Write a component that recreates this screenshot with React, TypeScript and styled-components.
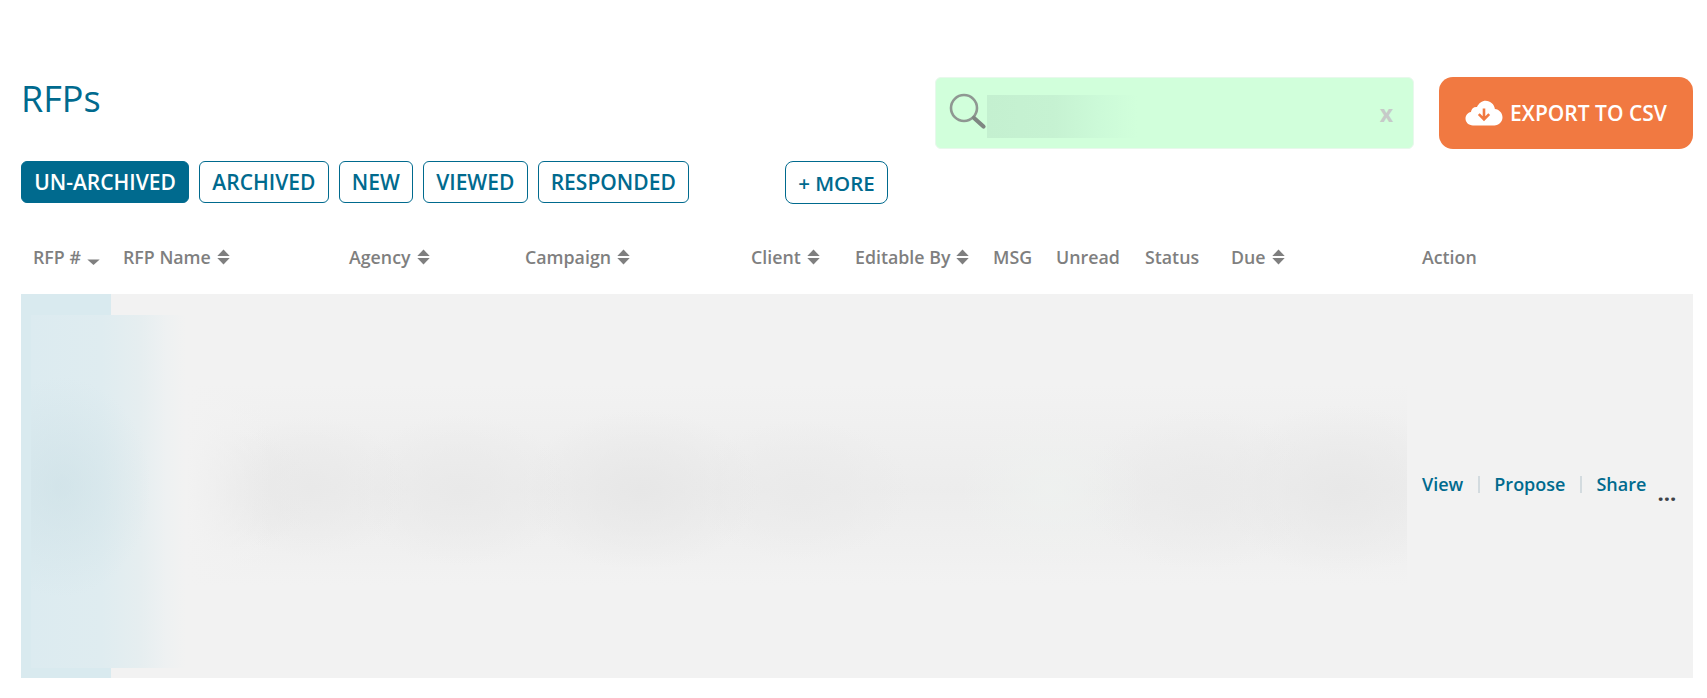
import React from 'react';
import styled, { createGlobalStyle } from 'styled-components';

const GlobalStyle = createGlobalStyle`
  html, body {
    margin: 0;
    padding: 0;
    background: #fff;
    font-family: 'Open Sans', 'Liberation Sans', sans-serif;
  }
`;

const COLUMNS = '90px 226px 176px 226px 104px 138px 63px 89px 86px 191px 283px';

const Page = styled.div`
  width: 1707px;
  height: 698px;
  box-sizing: border-box;
  padding: 77px 14px 0 21px;
  overflow: hidden;
`;

const Toolbar = styled.div`
  display: flex;
  justify-content: space-between;
  align-items: flex-start;
`;

const TitleBlock = styled.div`
  display: flex;
  flex-direction: column;
`;

const Title = styled.h1`
  margin: 0 0 32px 0;
  height: 52px;
  font-size: 36px;
  line-height: 44px;
  font-weight: 400;
  color: #006a8e;
`;

const Tabs = styled.div`
  display: flex;
  gap: 10px;
`;

const Tab = styled.button<{ $active?: boolean }>`
  height: 42px;
  padding: 0 12.2px;
  border: 1px solid #006a8e;
  border-radius: 6px;
  background: ${props => (props.$active ? '#006a8e' : '#fff')};
  color: ${props => (props.$active ? '#fff' : '#006a8e')};
  font-family: inherit;
  font-size: 21px;
  font-weight: 600;
`;

const MoreTab = styled(Tab)`
  height: 43px;
  margin-left: 86px;
  border-radius: 8px;
  font-size: 20.5px;
`;

const Actions = styled.div`
  display: flex;
  gap: 25px;
`;

const SearchBox = styled.div`
  position: relative;
  display: flex;
  align-items: center;
  justify-content: space-between;
  box-sizing: border-box;
  width: 479px;
  height: 72px;
  padding: 0 20px 0 12px;
  background: #d1ffdb;
  border: 1px solid #e8f8ec;
  border-radius: 6px;
`;

const SearchValue = styled.div`
  position: absolute;
  left: 51px;
  top: 17px;
  width: 150px;
  height: 43px;
  background: linear-gradient(90deg, #c4f0d0 0%, #c6f2d2 45%, #ccfad8 75%, #d1ffdb 100%);
`;

const ClearButton = styled.span`
  font-size: 23px;
  font-weight: 700;
  line-height: 24px;
  color: #c6cac8;
`;

const ExportButton = styled.button`
  display: flex;
  align-items: center;
  justify-content: center;
  gap: 7px;
  width: 254px;
  height: 72px;
  padding: 0;
  border: 0;
  border-radius: 14px;
  background: #f17941;
  color: #fff;
  font-family: inherit;
  font-size: 21px;
  font-weight: 600;
`;

const HeaderRow = styled.div`
  display: grid;
  grid-template-columns: ${COLUMNS};
  align-items: center;
  height: 56px;
  margin-top: 25px;
`;

const HeaderCell = styled.div`
  display: flex;
  align-items: center;
  gap: 6px;
  padding-left: 12px;
  font-size: 17.8px;
  font-weight: 600;
  color: #7f7f7f;
  white-space: nowrap;
`;

const BodyRow = styled.div`
  position: relative;
  display: grid;
  grid-template-columns: ${COLUMNS};
  height: 384px;
  margin-top: 9px;
  background: #f2f2f2;
`;

const IdCell = styled.div`
  grid-column: 1;
  background: #d9eaef;
`;

const ActionCell = styled.div`
  grid-column: 11;
  display: flex;
  align-items: center;
  padding: 0 0 4px 12px;
  font-size: 18px;
  font-weight: 600;
  color: #006a8e;
`;

const Divider = styled.span`
  width: 2px;
  height: 17px;
  margin: 0 14.5px;
  background: #d3dbdf;
`;

const MoreDots = styled.span`
  align-self: center;
  margin: 15px 0 0 11px;
  font-size: 22px;
  line-height: 20px;
  font-weight: 700;
  color: #3d4248;
`;

/* redacted row contents, blurred in the reference */
const BlurPatch = styled.div`
  position: absolute;
  left: 10px;
  top: 21px;
  width: 1376px;
  height: 353px;
  pointer-events: none;
  background:
    radial-gradient(ellipse 90px 110px at 30px 172px, rgba(200, 221, 227, 0.5), rgba(200, 221, 227, 0)),
    linear-gradient(90deg, #dcebf0 0px, #dfecf0 70px, #e6eef0 110px, #eef1f2 135px, #f2f2f2 155px, rgba(242, 242, 242, 0) 240px),
    radial-gradient(ellipse 90px 80px at 1020px 175px, rgba(239, 242, 240, 0.75), rgba(239, 242, 240, 0)),
    radial-gradient(ellipse 90px 60px at 200px 175px, #e9e9e9, rgba(233, 233, 233, 0)),
    radial-gradient(ellipse 100px 70px at 280px 172px, #e9e9e9, rgba(233, 233, 233, 0)),
    radial-gradient(ellipse 110px 75px at 430px 175px, #e9e9e9, rgba(233, 233, 233, 0)),
    radial-gradient(ellipse 120px 80px at 610px 175px, #e7e7e7, rgba(231, 231, 231, 0)),
    radial-gradient(ellipse 110px 70px at 770px 175px, #eaeaea, rgba(234, 234, 234, 0)),
    radial-gradient(ellipse 120px 80px at 1170px 175px, #eaeaea, rgba(234, 234, 234, 0)),
    radial-gradient(ellipse 120px 85px at 1310px 175px, #e8e8e8, rgba(232, 232, 232, 0)),
    linear-gradient(180deg, rgba(236, 236, 236, 0) 70px, rgba(236, 236, 236, 0.9) 175px, rgba(236, 236, 236, 0) 270px);
`;

const SortIcon = () => (
  <svg width="13" height="16" viewBox="0 0 13 16" fill="#7f7f7f">
    <path d="M6.5 0.5 12.7 7H0.3Z" />
    <path d="M6.5 15.5 0.3 9H12.7Z" />
  </svg>
);

const SortedIcon = () => (
  <svg width="13" height="16" viewBox="0 0 13 16" fill="#7f7f7f">
    <path d="M6.5 16 0.3 10.5H12.7Z" />
  </svg>
);

const SearchIcon = () => (
  <svg width="40" height="40" viewBox="0 0 40 40" fill="none">
    <circle cx="16" cy="15" r="13" stroke="#8f9792" strokeWidth="2.6" />
    <path d="M26 25 35.5 33.5" stroke="#7f8782" strokeWidth="4.2" strokeLinecap="round" />
  </svg>
);

const CloudIcon = () => (
  <svg width="38" height="26" viewBox="0 0 38 26">
    <path
      d="M8 25.5C3.6 25.5.5 22.4.5 18.6c0-3.4 2.4-6 5.4-6.7C6.4 8.6 9 6.6 12 7 13.8 3.2 17 .8 20.6.8c4.9 0 8.7 3.6 9.3 8.3 4.2.4 7.6 4 7.6 8.2 0 4.6-3.6 8.2-8.2 8.2Z"
      fill="#fff"
    />
    <path d="M19 8.5V19M13.8 14.2 19 19.4l5.2-5.2" fill="none" stroke="#f17941" strokeWidth="2.6" />
  </svg>
);

type Column = { label: string; sort?: 'both' | 'sorted' };

const columns: Column[] = [
  { label: 'RFP #', sort: 'sorted' },
  { label: 'RFP Name', sort: 'both' },
  { label: 'Agency', sort: 'both' },
  { label: 'Campaign', sort: 'both' },
  { label: 'Client', sort: 'both' },
  { label: 'Editable By', sort: 'both' },
  { label: 'MSG' },
  { label: 'Unread' },
  { label: 'Status' },
  { label: 'Due', sort: 'both' },
  { label: 'Action' },
];

const tabs = ['UN-ARCHIVED', 'ARCHIVED', 'NEW', 'VIEWED', 'RESPONDED'];

const App: React.FC = () => {
  return (
    <Page>
      <GlobalStyle />
      <Toolbar>
        <TitleBlock>
          <Title>RFPs</Title>
          <Tabs>
            {tabs.map((tab, i) => (
              <Tab key={tab} $active={i === 0}>
                {tab}
              </Tab>
            ))}
            <MoreTab>+ MORE</MoreTab>
          </Tabs>
        </TitleBlock>
        <Actions>
          <SearchBox>
            <SearchIcon />
            <SearchValue />
            <ClearButton>x</ClearButton>
          </SearchBox>
          <ExportButton>
            <CloudIcon />
            EXPORT TO CSV
          </ExportButton>
        </Actions>
      </Toolbar>

      <HeaderRow>
        {columns.map(col => (
          <HeaderCell key={col.label}>
            {col.label}
            {col.sort === 'both' && <SortIcon />}
            {col.sort === 'sorted' && <SortedIcon />}
          </HeaderCell>
        ))}
      </HeaderRow>

      <BodyRow>
        <IdCell />
        <BlurPatch />
        <ActionCell>
          View
          <Divider />
          Propose
          <Divider />
          Share
          <MoreDots>...</MoreDots>
        </ActionCell>
      </BodyRow>
    </Page>
  );
};

export default App;
